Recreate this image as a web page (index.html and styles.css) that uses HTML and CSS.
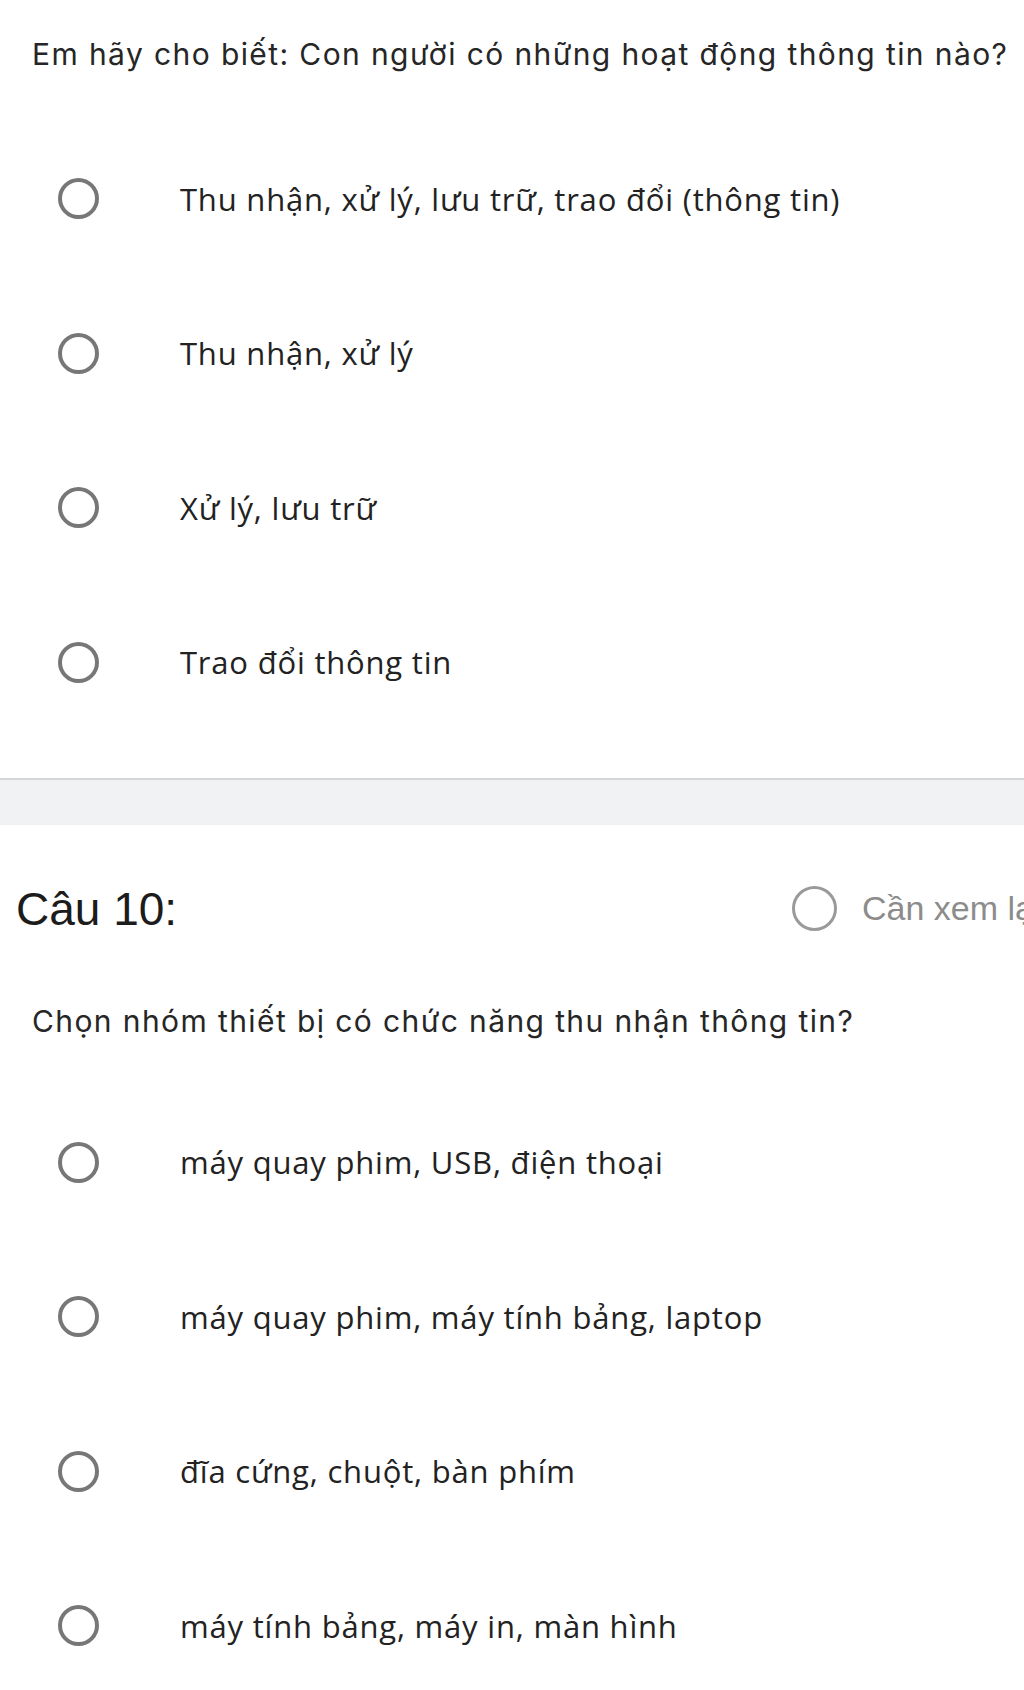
FILE: index.html
```html
<!DOCTYPE html>
<html>
<head>
<meta charset="utf-8">
<title>Câu hỏi trắc nghiệm</title>
<link rel="stylesheet" href="styles.css">
</head>
<body>
	<section class="cau_hoi cau_dau">
		<p class="de_bai">Em hãy cho biết: Con người có những hoạt động thông tin nào?</p>
		<ul class="dap_an">
			<li><span class="nut_chon"></span><span class="noi_dung">Thu nhận, xử lý, lưu trữ, trao đổi (thông tin)</span></li>
			<li><span class="nut_chon"></span><span class="noi_dung">Thu nhận, xử lý</span></li>
			<li><span class="nut_chon"></span><span class="noi_dung">Xử lý, lưu trữ</span></li>
			<li><span class="nut_chon"></span><span class="noi_dung">Trao đổi thông tin</span></li>
		</ul>
	</section>

	<div class="ngan_cach"></div>

	<section class="cau_hoi">
		<div class="tieu_de">
			<h2 class="so_cau">Câu 10:</h2>
			<label class="xem_lai"><span class="nut_chon nut_nho"></span>Cần xem lại</label>
		</div>
		<p class="de_bai">Chọn nhóm thiết bị có chức năng thu nhận thông tin?</p>
		<ul class="dap_an">
			<li><span class="nut_chon"></span><span class="noi_dung">máy quay phim, USB, điện thoại</span></li>
			<li><span class="nut_chon"></span><span class="noi_dung">máy quay phim, máy tính bảng, laptop</span></li>
			<li><span class="nut_chon"></span><span class="noi_dung">đĩa cứng, chuột, bàn phím</span></li>
			<li><span class="nut_chon"></span><span class="noi_dung">máy tính bảng, máy in, màn hình</span></li>
		</ul>
	</section>
</body>
</html>
```

FILE: styles.css
```css
	html {
		height: 100%;
	}

	body {
		margin: 0;
		overflow: hidden;
		background: #fff;
		color: #222;
		font-family: "Liberation Sans", Arial, sans-serif;
	}

	.de_bai {
		margin: 0;
		padding: 34px 0 47.5px 32px;
		font-family: Inter, "Liberation Sans", sans-serif;
		font-size: 30px;
		letter-spacing: 1.4px;
		line-height: 40px;
		color: #262626;
		white-space: nowrap;
	}

	.dap_an {
		list-style: none;
		margin: 0;
		padding: 0;
	}

	.dap_an li {
		display: flex;
		align-items: center;
		height: 154.5px;
	}

	.nut_chon {
		flex: 0 0 auto;
		box-sizing: border-box;
		width: 41px;
		height: 41px;
		margin-left: 58px;
		border: 4px solid #777;
		border-radius: 50%;
	}

	.noi_dung {
		margin-left: 81px;
		font-family: "Open Sans", "Noto Sans", sans-serif;
		font-size: 31px;
		letter-spacing: 0.8px;
		color: #222;
		white-space: nowrap;
	}

	.ngan_cach {
		margin-top: 38px;
		height: 45px;
		border-top: 2px solid #d3d5d8;
		background: #f1f2f4;
	}

	.tieu_de {
		display: flex;
		align-items: center;
		height: 60px;
		padding-top: 54px;
		white-space: nowrap;
	}

	.so_cau {
		flex: 0 0 776px;
		margin: 0 0 0 16px;
		font-size: 46px;
		font-weight: normal;
		color: #1c1c1c;
	}

	.xem_lai {
		display: flex;
		align-items: center;
		flex: 0 0 auto;
		font-size: 34px;
		color: #8c8c8c;
	}

	.nut_chon.nut_nho {
		width: 45px;
		height: 45px;
		margin: 0 25px 0 0;
		border: 3.5px solid #9a9a9a;
	}

	.cau_hoi .tieu_de + .de_bai {
		padding-top: 62px;
		padding-bottom: 44.5px;
	}
```
